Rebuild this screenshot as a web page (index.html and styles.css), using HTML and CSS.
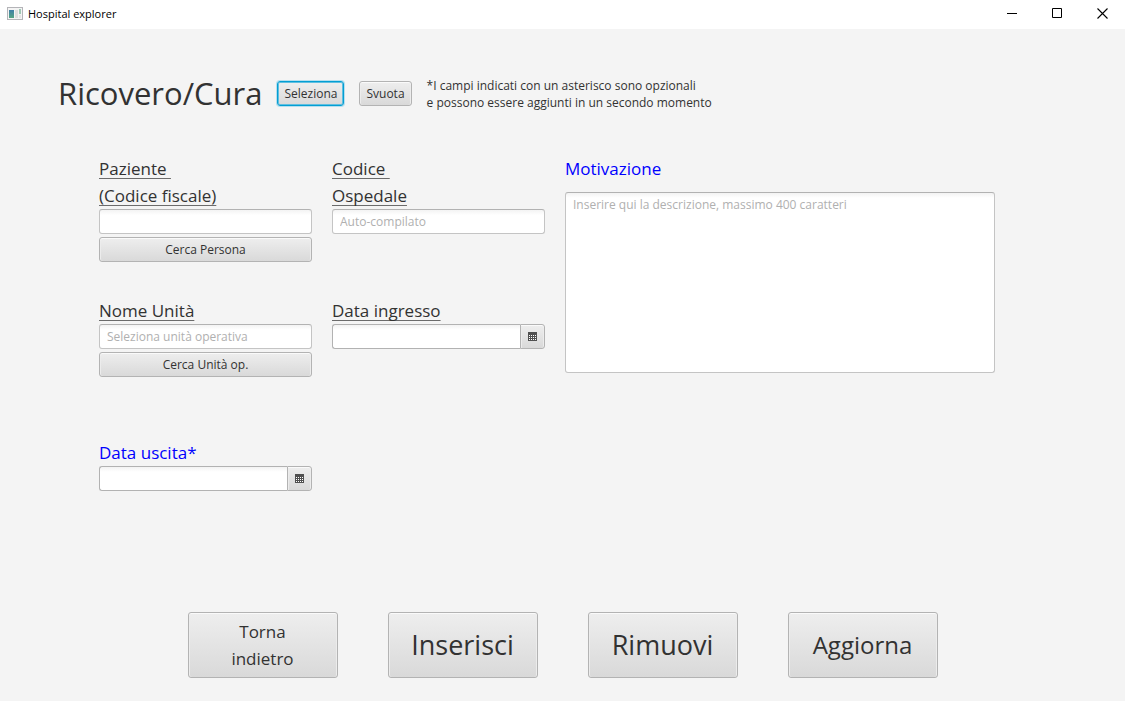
FILE: index.html
```html
<!DOCTYPE html>
<html lang="it">
<head>
<meta charset="utf-8">
<title>Hospital explorer</title>
<link rel="stylesheet" href="styles.css">
</head>
<body>
<div class="titlebar">
  <svg class="app-icon" width="16" height="14" viewBox="0 0 16 14" aria-hidden="true">
    <defs><linearGradient id="pane" x1="0" y1="0" x2="0" y2="1"><stop offset="0" stop-color="#3f7fa8"/><stop offset="1" stop-color="#55a583"/></linearGradient></defs>
    <rect x="0.5" y="0.5" width="15" height="12" fill="#f4f4f4" stroke="#b4b4b8"/>
    <rect x="2" y="3" width="5" height="8" fill="url(#pane)"/>
    <rect x="8" y="3" width="3" height="8" fill="#dedede"/>
    <rect x="12" y="2" width="2" height="5" fill="#9fc9b5"/>
    <rect x="12" y="8" width="2" height="3" fill="#e4e4e4"/>
  </svg>
  <span class="app-name">Hospital explorer</span>
  <div class="window-controls">
    <button class="window-button" type="button" aria-label="Riduci a icona"><svg width="11" height="11" viewBox="0 0 11 11"><path d="M0 5.5h10" stroke="#000" fill="none"/></svg></button>
    <button class="window-button" type="button" aria-label="Ingrandisci"><svg width="11" height="11" viewBox="0 0 11 11"><path d="M0.5 0.5h9v9h-9z" stroke="#000" fill="none"/></svg></button>
    <button class="window-button" type="button" aria-label="Chiudi"><svg width="11" height="11" viewBox="0 0 11 11"><path d="M0.5 0.5l10 10M10.5 0.5l-10 10" stroke="#000" stroke-width="1.1" fill="none"/></svg></button>
  </div>
</div>
<main class="content">
  <header class="page-header">
    <h1 class="page-title">Ricovero/Cura</h1>
    <button class="button button-focused" type="button">Seleziona</button>
    <button class="button" type="button">Svuota</button>
    <p class="note">*I campi indicati con un asterisco sono opzionali<br>e possono essere aggiunti in un secondo momento</p>
  </header>
  <form class="form">
    <div class="field">
      <label class="label required" for="paziente">Paziente&nbsp;<br>(Codice fiscale)</label>
      <input class="input" id="paziente" type="text">
      <button class="button" type="button">Cerca Persona</button>
    </div>
    <div class="field">
      <label class="label required" for="ospedale">Codice&nbsp;<br>Ospedale</label>
      <input class="input" id="ospedale" type="text" placeholder="Auto-compilato">
    </div>
    <div class="field field-tall">
      <label class="label optional" for="motivazione">Motivazione</label>
      <textarea class="input textarea" id="motivazione" placeholder="Inserire qui la descrizione, massimo 400 caratteri"></textarea>
    </div>
    <div class="field">
      <label class="label required" for="unita">Nome Unità</label>
      <input class="input" id="unita" type="text" placeholder="Seleziona unità operativa">
      <button class="button" type="button">Cerca Unità op.</button>
    </div>
    <div class="field">
      <label class="label required" for="ingresso">Data ingresso</label>
      <div class="date">
        <input class="input date-input" id="ingresso" type="text">
        <button class="button date-button" type="button" aria-label="Apri calendario"><svg width="9" height="9" viewBox="0 0 9 9"><path d="M0 0h9v9H0z" fill="#505050"/><path d="M1 3.5h7M1 5.5h7M1 7.5h7" stroke="#fff" stroke-dasharray="1 1"/></svg></button>
      </div>
    </div>
    <div class="field">
      <label class="label optional" for="uscita">Data uscita*</label>
      <div class="date">
        <input class="input date-input" id="uscita" type="text">
        <button class="button date-button" type="button" aria-label="Apri calendario"><svg width="9" height="9" viewBox="0 0 9 9"><path d="M0 0h9v9H0z" fill="#505050"/><path d="M1 3.5h7M1 5.5h7M1 7.5h7" stroke="#fff" stroke-dasharray="1 1"/></svg></button>
      </div>
    </div>
  </form>
  <footer class="actions">
    <button class="button action action-small" type="button">Torna<br>indietro</button>
    <button class="button action action-large" type="button">Inserisci</button>
    <button class="button action action-large" type="button">Rimuovi</button>
    <button class="button action action-medium" type="button">Aggiorna</button>
  </footer>
</main>
</body>
</html>
```
FILE: styles.css
```css
* {
  box-sizing: border-box;
}

body {
  margin: 0;
  min-height: 100vh;
  display: flex;
  flex-direction: column;
  background: #f4f4f4;
  color: #323232;
  font: 12px/17px "Open Sans", "Noto Sans", sans-serif;
}

button,
input,
textarea {
  font: inherit;
  color: inherit;
  margin: 0;
}

.titlebar {
  display: flex;
  align-items: center;
  height: 29px;
  padding-left: 7px;
  padding-bottom: 2px;
  background: #fff;
  color: #000;
}

.app-name {
  margin-left: 5px;
  font-size: 11px;
}

.window-controls {
  display: flex;
  margin-left: auto;
}

.window-button {
  display: grid;
  place-items: center;
  width: 45px;
  height: 27px;
  padding: 0;
  border: 0;
  background: none;
}

.content {
  flex: 1;
  display: flex;
  flex-direction: column;
  padding: 40px 0 23px;
}

.page-header {
  display: flex;
  align-items: center;
  gap: 15px;
  height: 49px;
  padding-left: 58px;
}

.page-title {
  margin: 0;
  font-size: 31px;
  font-weight: 400;
  line-height: 49px;
}

.note {
  margin: 0;
}

.button {
  height: 25px;
  padding: 0 6px;
  border: 1px solid #b3b3b3;
  border-radius: 3px;
  background: linear-gradient(#eeeeee, #d9d9d9);
  box-shadow: inset 0 1px #fafafa, inset 1px 0 #ececec, inset -1px 0 #ececec;
  line-height: 17px;
}

.button-focused {
  border-color: #039ed3;
  box-shadow: 0 0 0 1px #b5dfee, inset 0 0 0 1px #5fbfe0;
}

.form {
  display: grid;
  grid-template-columns: 213fr 213fr 430fr;
  grid-auto-rows: 142px;
  column-gap: 20px;
  padding: 0 130px 0 99px;
  margin-top: 37px;
}

.field {
  display: flex;
  flex-direction: column;
  align-items: stretch;
}

.field > .button {
  margin-top: 3px;
}

.field-tall {
  grid-column: 3;
  grid-row: 1 / span 2;
}

.label {
  font-size: 17px;
  line-height: 27px;
}

.required {
  text-decoration: underline;
  text-decoration-color: #6b6b6b;
  text-decoration-thickness: 1px;
  text-underline-offset: 3px;
  text-decoration-skip-ink: none;
}

.optional {
  color: #0000ff;
}

.input {
  width: 100%;
  height: 25px;
  padding: 0 7px;
  border: 1px solid #c4c4c4;
  border-top-color: #b2b2b2;
  border-radius: 3px;
  background: linear-gradient(#f3f3f3, #fff 5px);
  outline: none;
}

.input::placeholder {
  color: #b0b0b0;
  opacity: 1;
}

.textarea {
  height: 181px;
  margin-top: 10px;
  padding-top: 3px;
  resize: none;
}

.date {
  display: flex;
}

.date-input {
  flex: 1;
  min-width: 0;
  border-color: #b2b2b2;
  border-right: 0;
  border-radius: 3px 0 0 3px;
}

.date-button {
  display: grid;
  place-items: center;
  width: 25px;
  padding: 0;
  border-radius: 0 3px 3px 0;
}

.actions {
  display: flex;
  justify-content: center;
  gap: 50px;
  margin-top: auto;
}

.action {
  width: 150px;
  height: 66px;
}

.action-small {
  font-size: 17px;
  line-height: 27px;
}

.action-medium {
  font-size: 24px;
  line-height: 36px;
}

.action-large {
  font-size: 27px;
  line-height: 40px;
}
```
